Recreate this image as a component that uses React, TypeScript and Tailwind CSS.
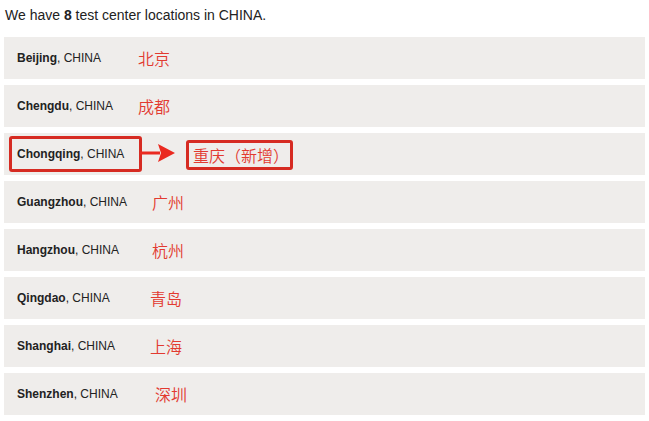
import React from "react";

type Row = { city: string; zh: string; zhClass: string };

const rows: Row[] = [
  { city: "Beijing", zh: "北京", zhClass: "ml-0" },
  { city: "Chengdu", zh: "成都", zhClass: "ml-0" },
  { city: "Chongqing", zh: "重庆（新增）", zhClass: "" },
  { city: "Guangzhou", zh: "广州", zhClass: "ml-[14px]" },
  { city: "Hangzhou", zh: "杭州", zhClass: "ml-[14px]" },
  { city: "Qingdao", zh: "青岛", zhClass: "ml-[12px]" },
  { city: "Shanghai", zh: "上海", zhClass: "ml-[12px]" },
  { city: "Shenzhen", zh: "深圳", zhClass: "ml-[17px]" },
];

const sans = "font-['Liberation_Sans',Arial,sans-serif]";
const cjk = "font-['Noto_Sans_CJK_SC',sans-serif] font-[350]";

export default function App() {
  return (
    <div className={`w-[649px] h-[421px] bg-white ${sans} text-[#222]`}>
      <p className="pl-[5px] pt-[5px] h-[37px] text-[14px] leading-[20px]">
        We have <b>8</b> test center locations in CHINA.
      </p>
      <div className="flex flex-col gap-[6px] pl-[4px] pr-[4px]">
        {rows.map((r) =>
          r.city === "Chongqing" ? (
            <div key={r.city} className="h-[42px] bg-[#efedeb] flex items-center">
              <div className="ml-[5px] w-[133px] h-[36px] border-[3px] border-[#d62b22] rounded-[3px] flex items-center pl-[5px] text-[12px] whitespace-nowrap">
                <b>{r.city}</b>, CHINA
              </div>
              <svg width="36" height="20" viewBox="0 0 36 20" className="-ml-[2px] -mt-[3px]">
                <rect x="0" y="8.5" width="20" height="3" fill="#ea2a20" />
                <polygon points="18,1 35,10 18,19 21,10" fill="#ea2a20" />
              </svg>
              <div className="ml-[10px] mt-[1px] w-[107px] h-[30px] border-[3px] border-[#d62b22] rounded-[3px] flex items-center pl-[4px]">
                <span className={`${cjk} text-[16px] leading-none text-[#e23a30]`}>{r.zh}</span>
              </div>
            </div>
          ) : (
            <div key={r.city} className="h-[42px] bg-[#efedeb] flex items-center pl-[13px]">
              <span className="w-[121px] text-[12px] whitespace-nowrap">
                <b>{r.city}</b>, CHINA
              </span>
              <span className={`${cjk} text-[16px] leading-none text-[#e23a30] ${r.zhClass}`}>{r.zh}</span>
            </div>
          )
        )}
      </div>
    </div>
  );
}
